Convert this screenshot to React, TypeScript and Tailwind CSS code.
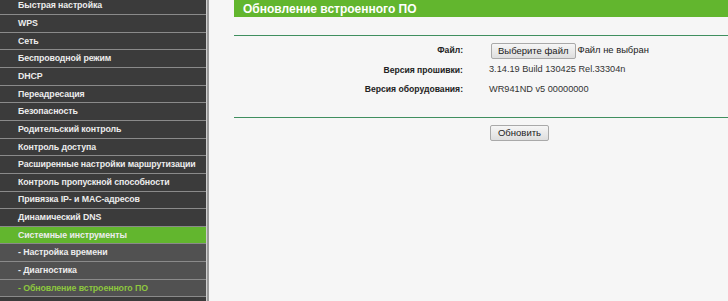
const menu = [
  { label: "Быстрая настройка" },
  { label: "WPS" },
  { label: "Сеть" },
  { label: "Беспроводной режим" },
  { label: "DHCP" },
  { label: "Переадресация" },
  { label: "Безопасность" },
  { label: "Родительский контроль" },
  { label: "Контроль доступа" },
  { label: "Расширенные настройки маршрутизации" },
  { label: "Контроль пропускной способности" },
  { label: "Привязка IP- и MAC-адресов" },
  { label: "Динамический DNS" },
  { label: "Системные инструменты", active: true },
  { label: "- Настройка времени", sub: true },
  { label: "- Диагностика", sub: true },
  { label: "- Обновление встроенного ПО", sub: true, current: true },
];

function SideItem({ item }: { item: { label: string; active?: boolean; sub?: boolean; current?: boolean } }) {
  let bg = "bg-[#3b3b3b]";
  if (item.active) bg = "bg-[#62b62e]";
  else if (item.sub) bg = "bg-[#515151]";
  const color = item.current ? "text-[#8dc63f]" : "text-[#ececec]";
  return (
    <div
      className={`${bg} ${color} h-[17.65px] border-b border-[#8a8a8a] flex items-center pl-[18px] text-[8.8px] tracking-[-0.1px] font-bold leading-none whitespace-nowrap`}
    >
      {item.label}
    </div>
  );
}

export default function App() {
  return (
    <div
      className="w-[728px] h-[301px] overflow-hidden flex bg-[#f6f6f6]"
      style={{ fontFamily: '"Liberation Sans", Arial, sans-serif' }}
    >
      {/* sidebar */}
      <div className="w-[206px] shrink-0 bg-[#3b3b3b] -mt-[2.5px]">
        {menu.map((m) => (
          <SideItem key={m.label} item={m} />
        ))}
      </div>
      <div className="w-[1px] bg-[#d0d0d0] shrink-0" />
      <div className="w-[2px] bg-[#9a9a9a] shrink-0" />

      {/* content */}
      <div className="flex-1 pl-[25px]">
        <div className="h-[17px] bg-[#62b62e] text-white text-[12px] font-bold flex items-center pl-[9px] leading-none">
          Обновление встроенного ПО
        </div>
        <div className="mt-[18px] h-[1px] bg-[#3f8f5f]" />

        <div className="pt-[6px] text-[9.2px]">
          <div className="flex items-center h-[17px]">
            <div className="w-[229px] text-right font-bold text-[8.6px] text-[#222]">Файл:</div>
            <div className="pl-[28px] flex items-center">
              <button className="h-[16px] px-[6px] border border-[#a9a9a9] rounded-[2px] bg-gradient-to-b from-[#f6f6f6] to-[#dedede] text-[9.5px] text-[#222] leading-none">
                Выберите файл
              </button>
              <span className="pl-[2px] text-[9.4px] text-[#222]">Файл не выбран</span>
            </div>
          </div>
          <div className="flex items-center h-[20px] mt-[1px]">
            <div className="w-[229px] text-right font-bold text-[8.6px] text-[#222]">Версия прошивки:</div>
            <div className="pl-[26px] text-[#333]">3.14.19 Build 130425 Rel.33304n</div>
          </div>
          <div className="flex items-center h-[19px]">
            <div className="w-[229px] text-right font-bold text-[8.6px] text-[#222]">Версия оборудования:</div>
            <div className="pl-[26px] text-[#333]">WR941ND v5 00000000</div>
          </div>
        </div>

        <div className="mt-[18px] h-[1px] bg-[#3f8f5f]" />
        <div className="pt-[1px] pl-[256px]">
          <button className="h-[16px] w-[59px] border border-[#a9a9a9] rounded-[2px] bg-gradient-to-b from-[#f6f6f6] to-[#dedede] text-[9.5px] text-[#222] leading-none">
            Обновить
          </button>
        </div>
      </div>
    </div>
  );
}
